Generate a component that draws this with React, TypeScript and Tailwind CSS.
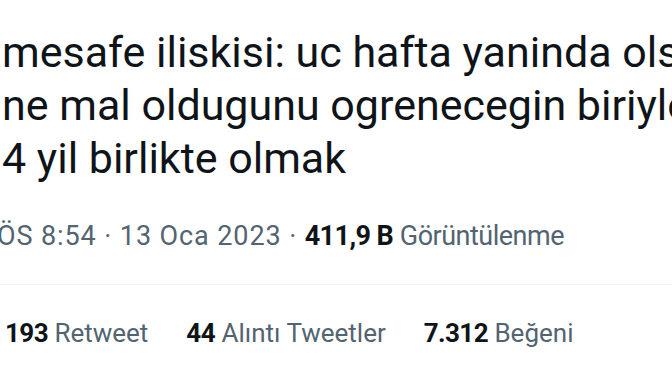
import React from 'react';

const bodyLines = [
  'mesafe iliskisi: uc hafta yaninda olsan',
  'ne mal oldugunu ogrenecegin biriyle',
  '4 yil birlikte olmak',
];

const stats = [
  { count: '193', label: 'Retweet' },
  { count: '44', label: 'Alıntı Tweetler' },
  { count: '7.312', label: 'Beğeni' },
];

const App: React.FunctionComponent = () => {
  return (
    <div className="h-[378px] w-[672px] overflow-hidden bg-white font-['Roboto',Arial,sans-serif]">
      <div className="pt-[26px] pl-[2px] text-[43px] leading-[53px] whitespace-nowrap text-[#0f1419]">
        {bodyLines.map(line => (
          <p key={line}>{line}</p>
        ))}
      </div>

      <p className="mt-[33px] -ml-[3px] text-[27px] leading-[36px] whitespace-nowrap text-[#536471]">
        <span className="tracking-[0.9px]">ÖS 8:54 · 13 Oca 2023 · </span>
        <span className="font-bold tracking-[-0.6px] text-[#0f1419]">411,9 B</span>{' '}
        <span className="tracking-[-0.5px]">Görüntülenme</span>
      </p>

      <div className="mt-[30px] h-px w-full bg-[#eff3f4]" />

      <div className="mt-[30px] flex gap-[38px] pl-[5px] text-[26px] leading-[36px] whitespace-nowrap text-[#536471]">
        {stats.map(s => (
          <span key={s.label}>
            <span className="font-bold tracking-[-0.6px] text-[#0f1419]">{s.count}</span> {s.label}
          </span>
        ))}
      </div>
    </div>
  );
};

export default App;
